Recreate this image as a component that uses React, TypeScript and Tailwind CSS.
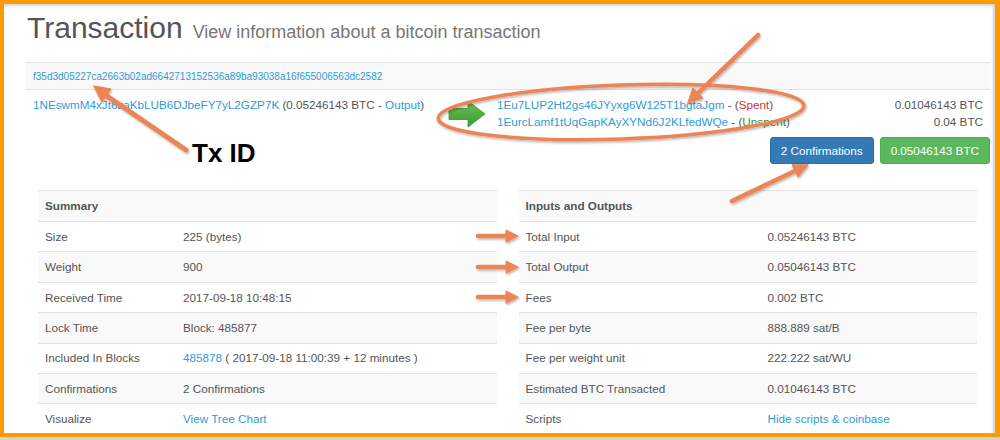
import React from "react";

const link = "text-[#2f9bd8]";

type Row = { label: string; value: React.ReactNode };

const summary: Row[] = [
  { label: "Size", value: "225 (bytes)" },
  { label: "Weight", value: "900" },
  { label: "Received Time", value: "2017-09-18 10:48:15" },
  { label: "Lock Time", value: "Block: 485877" },
  {
    label: "Included In Blocks",
    value: (
      <>
        <span className={link}>485878</span> ( 2017-09-18 11:00:39 + 12 minutes )
      </>
    ),
  },
  { label: "Confirmations", value: "2 Confirmations" },
  { label: "Visualize", value: <span className={link}>View Tree Chart</span> },
];

const io: Row[] = [
  { label: "Total Input", value: "0.05246143 BTC" },
  { label: "Total Output", value: "0.05046143 BTC" },
  { label: "Fees", value: "0.002 BTC" },
  { label: "Fee per byte", value: "888.889 sat/B" },
  { label: "Fee per weight unit", value: "222.222 sat/WU" },
  { label: "Estimated BTC Transacted", value: "0.01046143 BTC" },
  { label: "Scripts", value: <span className={link}>Hide scripts &amp; coinbase</span> },
];

function InfoTable({ title, rows, labelWidth }: { title: string; rows: Row[]; labelWidth: string }) {
  return (
    <div>
      <div className="flex h-[31px] items-center border-t border-[#e2e2e2] bg-[#f9f9f9] px-[7px] font-bold">
        {title}
      </div>
      {rows.map((r, i) => (
        <div
          key={r.label}
          className={
            i % 2 === 1
              ? "flex h-[30.4px] items-center border-t border-[#e2e2e2] bg-[#f9f9f9] px-[7px]"
              : "flex h-[30.4px] items-center border-t border-[#e2e2e2] bg-white px-[7px]"
          }
        >
          <div className={labelWidth}>{r.label}</div>
          <div>{r.value}</div>
        </div>
      ))}
    </div>
  );
}

function GreenArrow() {
  return (
    <svg width="38" height="28" viewBox="0 0 38 28">
      <defs>
        <linearGradient id="ga" x1="0" y1="0" x2="0" y2="1">
          <stop offset="0" stopColor="#6cc24a" />
          <stop offset="1" stopColor="#3a9a3a" />
        </linearGradient>
      </defs>
      <path d="M1 8.5 H20 V1 L37 14 L20 27 V19.5 H1 Z" fill="url(#ga)" stroke="#3d8b3d" strokeWidth="0.8" />
    </svg>
  );
}

function Annotations() {
  const c = "#ec8456";
  return (
    <svg className="pointer-events-none absolute left-0 top-0" width="1000" height="440">
      <defs>
        <filter id="sh" x="-10%" y="-10%" width="120%" height="120%">
          <feDropShadow dx="1" dy="1.5" stdDeviation="1" floodColor="#000" floodOpacity="0.3" />
        </filter>
      </defs>
      <g filter="url(#sh)" fill={c} stroke={c} strokeLinecap="round">
        {/* Tx ID arrow */}
        <line x1="186" y1="150" x2="104" y2="94" strokeWidth="5" />
        <polygon points="94,86 111,89 102,102" strokeWidth="1" />
        {/* top arrow */}
        <line x1="758" y1="35" x2="696" y2="95" strokeWidth="4.5" />
        <polygon points="688,103 703,98 693,88" strokeWidth="1" />
        {/* button arrow */}
        <line x1="732" y1="201" x2="797" y2="170" strokeWidth="4.5" />
        <polygon points="808,165 798,177 792,165" strokeWidth="1" />
        {/* small arrows */}
        <line x1="478" y1="236" x2="507" y2="236" strokeWidth="4.5" />
        <polygon points="518,236 506,230 506,242" strokeWidth="1" />
        <line x1="478" y1="267" x2="507" y2="267" strokeWidth="4.5" />
        <polygon points="518,267 506,261 506,273" strokeWidth="1" />
        <line x1="478" y1="297" x2="507" y2="297" strokeWidth="4.5" />
        <polygon points="518,297 506,291 506,303" strokeWidth="1" />
        {/* ellipse */}
        <ellipse cx="621" cy="112" rx="183" ry="27" fill="none" strokeWidth="3.5" transform="rotate(-2 621 112)" />
      </g>
    </svg>
  );
}

export default function App() {
  return (
    <div className="relative h-[440px] w-[1000px] bg-[#d4d4d4] font-['Liberation_Sans',Arial,sans-serif] text-[11.7px] text-[#555]">
      <div className="h-[437px] overflow-hidden border-b-4 border-l-4 border-r-[5px] border-t-4 border-[#ff9900] bg-white shadow-[inset_-2px_2px_3px_rgba(0,0,0,0.18)]">
        <div className="pl-[21px] pr-[5px] pt-[7px]">
          <div className="h-[33px] pl-[2px] leading-[33px] whitespace-nowrap">
            <span className="text-[30px] text-[#555]">Transaction</span>
            <span className="ml-[10px] text-[18px] text-[#777]">View information about a bitcoin transaction</span>
          </div>

          <div className={`mt-[18px] flex h-[27px] items-center border-t border-[#e2e2e2] bg-[#f9f9f9] px-[8px] text-[10px] ${link}`}>
            f35d3d05227ca2663b02ad6642713152536a89ba93038a16f655006563dc2582
          </div>

          <div className="flex border-t border-[#e2e2e2] pb-[7px] pt-[6px] leading-[17px]">
            <div className="w-[415px] pl-[8px]">
              <span className={link}>1NEswmM4xJt6zaKbLUB6DJbeFY7yL2GZP7K</span> (0.05246143 BTC -{" "}
              <span className={link}>Output</span>)
            </div>
            <div className="flex w-[57px] items-center pl-[8px] pt-[1px]">
              <GreenArrow />
            </div>
            <div className="flex-1 pr-[7px]">
              <div className="flex justify-between">
                <span>
                  <span className={link}>1Eu7LUP2Ht2gs46JYyxg6W125T1bgtaJgm</span> - (
                  <span className="text-[#d9302c]">Spent</span>)
                </span>
                <span>0.01046143 BTC</span>
              </div>
              <div className="flex justify-between">
                <span>
                  <span className={link}>1EurcLamf1tUqGapKAyXYNd6J2KLfedWQe</span> - (
                  <span className="text-[#3d8b2e]">Unspent</span>)
                </span>
                <span>0.04 BTC</span>
              </div>
            </div>
          </div>

          <div className="flex justify-end gap-[6px]">
            <button className="h-[27px] rounded-[3px] border border-[#2e6da4] bg-[#337ab7] px-[10px] text-white">
              2 Confirmations
            </button>
            <button className="h-[27px] rounded-[3px] border border-[#4cae4c] bg-[#5cb85c] px-[10px] text-white">
              0.05046143 BTC
            </button>
          </div>

          <div className="mx-[13px] mt-[26px] grid grid-cols-2 gap-x-[22px]">
            <InfoTable title="Summary" rows={summary} labelWidth="w-[138px]" />
            <InfoTable title="Inputs and Outputs" rows={io} labelWidth="w-[242px]" />
          </div>
        </div>
      </div>

      <Annotations />

      <div className="absolute left-[192px] top-[140px] text-[26px] font-bold leading-[26px] text-black">Tx ID</div>
    </div>
  );
}
